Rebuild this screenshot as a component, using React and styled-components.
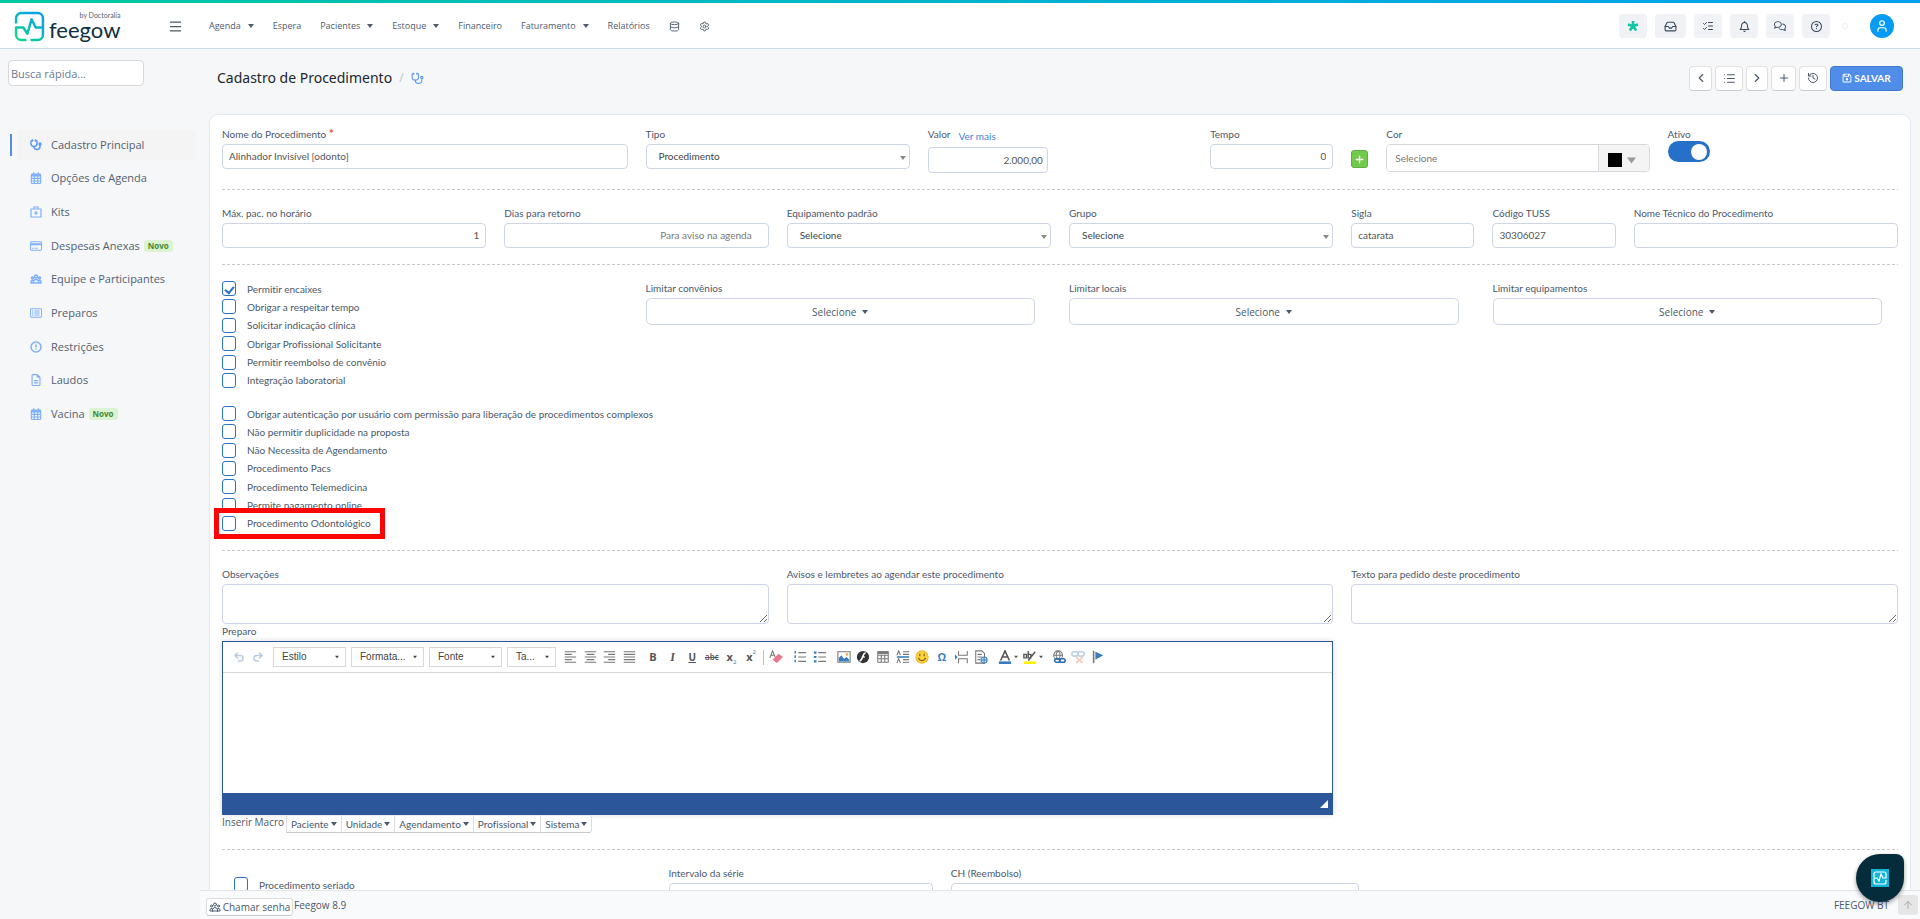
import { useState } from 'react';
import styled, { createGlobalStyle } from 'styled-components';
import {
    Stethoscope, Database, Settings, Inbox, ListChecks, List,
    ChevronLeft, ChevronRight, Plus, History, CircleAlert, Menu, ArrowUp, User,
    Undo2, Redo2,
} from 'lucide-react';
import {
    FaRegCalendarDays, FaRegCreditCard, FaRegRectangleList, FaRegFileLines,
    FaRegBell, FaRegComments, FaRegCircleQuestion, FaRegFloppyDisk,
} from 'react-icons/fa6';
import { HiOutlineUserGroup } from 'react-icons/hi';

const GlobalStyle = createGlobalStyle`
    * {
        box-sizing: border-box;
    }
    body {
        margin: 0;
        background: #f5f7f9;
        color: #4a586b;
        font-family: Lato, "Open Sans", sans-serif;
        font-size: 10px;
        line-height: 14px;
        font-variant-ligatures: none;
    }
    button, input, select, textarea {
        font: inherit;
        font-variant-ligatures: none;
        color: inherit;
        margin: 0;
    }
    svg {
        display: block;
        flex: none;
    }
`;

const Page = styled.div`
    height: 100vh;
    display: flex;
    flex-direction: column;
    overflow: hidden;
`;

const TopBar = styled.header`
    flex: none;
    height: 49px;
    display: flex;
    align-items: center;
    padding: 4px 26px 0 14px;
    border-bottom: 1px solid #d0daea;
    background: linear-gradient(90deg, #00c9a0, #00b8c4 40%, #00a0f0) top / 100% 3px no-repeat #fff;
`;

const Logo = styled.a`
    width: 154px;
    display: flex;
    align-items: center;
    gap: 4px;
    color: #0d3040;
    text-decoration: none;
`;

const Brand = styled.span`
    display: flex;
    flex-direction: column;
    align-items: flex-end;
`;

const BrandBy = styled.small`
    font-size: 7px;
    line-height: 8px;
    color: #55636f;
`;

const BrandName = styled.span`
    font-size: 22px;
    line-height: 22px;
`;

const BareButton = styled.button`
    display: flex;
    align-items: center;
    justify-content: center;
    padding: 0;
    border: 0;
    background: none;
    cursor: pointer;
`;

const Nav = styled.nav`
    flex: 1;
    display: flex;
    align-items: center;
    gap: 19px;
    margin-left: 26px;
    font-family: "Open Sans", sans-serif;
    font-size: 9px;
`;

const NavLink = styled.a`
    display: flex;
    align-items: center;
    gap: 7px;
    color: #4c5b6e;
    text-decoration: none;
`;

const TopActions = styled.div`
    display: flex;
    align-items: center;
    gap: 8px;
`;

const TopAction = styled(BareButton)`
    width: ${(p) => p.$wide ? 31 : 28}px;
    height: 24px;
    border-radius: 4px;
    background: #f0f2f6;
    color: #34495e;
`;

const StatusDot = styled.span`
    width: 6px;
    height: 6px;
    margin: 0 14px 0 4px;
    border: 1px solid #eceef0;
    border-radius: 50%;
`;

const Avatar = styled(BareButton)`
    width: 24px;
    height: 24px;
    border-radius: 50%;
    background: #049af5;
    color: #fff;
`;

const Body = styled.div`
    flex: 1;
    min-height: 0;
    display: flex;
`;

const Sidebar = styled.aside`
    flex: none;
    width: 200px;
    padding: 11px 4px 0 8px;
    font-family: "Open Sans", sans-serif;
`;

const SearchBox = styled.input`
    display: block;
    width: 136px;
    height: 26px;
    padding: 0 2px;
    border: 1px solid #d8d8d8;
    border-radius: 4px;
    background: #fff;
    font-size: 11px;
    &::placeholder {
        color: #6b7c93;
        opacity: 1;
    }
`;

const SideMenu = styled.ul`
    display: grid;
    grid-auto-rows: 1fr;
    height: 303px;
    margin: 42px 0 0;
    padding: 0;
    list-style: none;
`;

const SideItem = styled.li`
    display: flex;
    align-items: center;
    &::before {
        content: "";
        width: 2px;
        height: 22px;
        margin: 0 5px 0 2px;
        background: ${(p) => p.$active ? '#4f8de9' : 'transparent'};
    }
`;

const SideLink = styled.a`
    flex: 1;
    height: 30px;
    display: flex;
    align-items: center;
    padding-left: 13px;
    border-radius: 4px;
    background: ${(p) => p.$active ? '#f4f4f4' : 'none'};
    color: #54606f;
    font-size: 11px;
    font-weight: ${(p) => p.$active ? 500 : 400};
    text-decoration: none;
    svg {
        width: 12px;
        height: 12px;
        margin-right: 9px;
        color: ${(p) => p.$active ? '#5b9bf7' : '#7fb0fb'};
    }
`;

const Badge = styled.span`
    margin-left: 4px;
    padding: 0 4px;
    border-radius: 3px;
    background: #dcf3d2;
    color: #3f8a35;
    font-size: 8px;
    line-height: 12px;
    font-weight: 700;
`;

const Main = styled.main`
    flex: 1;
    min-width: 0;
    display: flex;
    flex-direction: column;
`;

const Content = styled.div`
    flex: 1;
    min-height: 0;
    overflow: hidden;
    padding: 0 9px;
`;

const TitleBar = styled.div`
    height: 65px;
    display: flex;
    align-items: center;
    padding: 0 8px 7px;
`;

const Title = styled.h1`
    flex: 1;
    display: flex;
    align-items: center;
    gap: 7px;
    margin: 0;
    color: #22262c;
    font-family: "Noto Sans", sans-serif;
    font-size: 14px;
    line-height: 20px;
    font-weight: 400;
`;

const Slash = styled.span`
    color: #c3c7cc;
    font-size: 12px;
`;

const Actions = styled.div`
    display: flex;
    gap: 3px;
`;

const ActionButton = styled(BareButton)`
    width: ${(p) => p.$width || 23}px;
    height: 25px;
    border: 1px solid #e0e0e0;
    border-bottom-color: #ccc;
    border-radius: 4px;
    background: #fff;
    color: #4a5768;
`;

const SaveButton = styled(BareButton)`
    gap: 2px;
    width: 73px;
    height: 25px;
    border: 1px solid #4079cf;
    border-radius: 4px;
    background: #4f8de9;
    color: #fff;
    font-weight: 700;
`;

const Card = styled.form`
    border: 1px solid #e3e8f0;
    border-radius: 9px;
    background: #fff;
    padding: 12px 12px 40px;
`;

const Row = styled.div`
    display: grid;
    grid-template-columns: repeat(12, 1fr);
    column-gap: 18px;
    align-items: start;
`;

const ColorRow = styled.div`
    grid-column: span 4;
    display: grid;
    grid-template-columns: 17px 8fr 7fr;
    gap: 18px;
    align-items: start;
`;

const SerialRow = styled.div`
    display: grid;
    grid-template-columns: 52fr 33fr 51fr 65fr;
    column-gap: 18px;
    align-items: start;
    padding-left: 12px;
`;

const Divider = styled.hr`
    height: 1px;
    margin: 16px 0;
    border: 0;
    background: repeating-linear-gradient(90deg, #c9c9c9 0 3px, transparent 3px 5px);
`;

const Field = styled.div`
    grid-column: span ${(p) => p.$span || 1};
    min-width: 0;
    padding-right: ${(p) => p.$inset ? 16 : 0}px;
`;

const Label = styled.label`
    display: block;
    margin-bottom: 3px;
    white-space: nowrap;
`;

const LabelLine = styled.div`
    display: flex;
    align-items: flex-start;
    gap: 8px;
    height: 20px;
`;

const Required = styled.span`
    color: #f0432e;
    font-size: 12px;
    font-weight: 700;
`;

const MoreLink = styled.a`
    padding-top: 2px;
    color: #3f7fdf;
    text-decoration: none;
`;

const TextInput = styled.input`
    display: block;
    width: 100%;
    height: 25px;
    padding: 0 6px 1px;
    border: 1px solid #ced6e5;
    border-radius: 4px;
    background: #fff;
    color: #555;
    text-align: ${(p) => p.$right ? 'right' : 'left'};
    &::placeholder {
        color: #777;
        opacity: 1;
    }
`;

const PriceInput = styled(TextInput)`
    width: 120px;
    height: 26px;
    padding: 0 4px;
`;

const DaysInput = styled(TextInput)`
    padding-right: 16px;
`;

const SelectWrap = styled.div`
    position: relative;
`;

const SelectArrow = styled.span`
    position: absolute;
    right: 4px;
    top: 11px;
    pointer-events: none;
    color: #888;
`;

const SelectBox = styled.select`
    display: block;
    appearance: none;
    width: 100%;
    height: 25px;
    padding: 0 12px 1px;
    border: 1px solid #ced6e5;
    border-radius: 4px;
    background: #fff;
    color: #444;
`;

const PlusButton = styled(BareButton)`
    width: 17px;
    height: 18px;
    margin-top: 23px;
    border: 1px solid #63ad45;
    border-radius: 3px;
    background: #70ca4c;
    color: #fff;
`;

const ColorGroup = styled.div`
    display: flex;
    height: 28px;
    border: 1px solid #d5d8dd;
    border-radius: 4px;
    overflow: hidden;
`;

const ColorInput = styled.input`
    flex: 1;
    min-width: 0;
    padding: 0 8px;
    border: 0;
    background: #fff;
    &::placeholder {
        color: #777;
        opacity: 1;
    }
`;

const ColorButton = styled(BareButton)`
    gap: 5px;
    width: 51px;
    padding: 4px 4px 0 0;
    border-left: 1px solid #d5d8dd;
    background: #f4f4f4;
    color: #9a9a9a;
`;

const Swatch = styled.span`
    width: 14px;
    height: 14px;
    background: #000;
`;

const Switch = styled.input`
    display: block;
    appearance: none;
    width: 42px;
    height: 21px;
    margin-top: -3px;
    border-radius: 11px;
    background: ${(p) => p.checked ? '#2670c9' : '#ccc'};
    &::before {
        content: "";
        display: block;
        width: 16px;
        height: 16px;
        margin: 3px 0 0 ${(p) => p.checked ? 23 : 3}px;
        border-radius: 50%;
        background: #fff;
    }
`;

const CheckColumn = styled.div`
    grid-column: span 3;
    padding-bottom: 3px;
`;

const CheckGroup = styled.div`
    display: flex;
    flex-direction: column;
    justify-content: space-between;
    height: ${(p) => p.$height}px;
    & + & {
        margin-top: 18px;
    }
`;

const CheckLine = styled.div`
    position: relative;
    display: flex;
    align-items: center;
    gap: 11px;
    height: 15px;
    white-space: nowrap;
    line-height: 12px;
`;

const CheckBox = styled.input`
    appearance: none;
    flex: none;
    display: grid;
    place-items: center;
    width: 14px;
    height: 15px;
    border: 1px solid #2a72c8;
    border-radius: 3px;
    background: #fff;
    &:checked::before {
        content: "";
        width: 7px;
        height: 4px;
        border-left: 2px solid #2a72c8;
        border-bottom: 2px solid #2a72c8;
        transform: rotate(-50deg);
    }
`;

const Highlight = styled.span`
    position: absolute;
    left: -8px;
    top: -8px;
    width: 171px;
    height: 31px;
    border: 5px solid #fb0505;
    pointer-events: none;
`;

const MultiButton = styled(BareButton)`
    gap: 6px;
    width: 100%;
    height: 27px;
    border: 1px solid #ced6e5;
    border-radius: 5px;
    background: #fff;
    font-family: "Open Sans", sans-serif;
`;

const Area = styled.textarea`
    display: block;
    width: 100%;
    height: 40px;
    padding: 4px 6px;
    border: 1px solid #ced3e8;
    border-radius: 4px;
    background: #fff;
    resize: vertical;
`;

const Editor = styled.div`
    border: 1px solid #2b579a;
    background: #fff;
    box-shadow: 0 0 6px rgba(0, 0, 0, 0.15);
`;

const Toolbar = styled.div`
    display: flex;
    align-items: center;
    gap: 4px;
    height: 31px;
    padding-left: 6px;
    border-bottom: 1px solid #d8d8d8;
    color: #555;
    font-family: "Open Sans", sans-serif;
`;

const ToolGroup = styled.div`
    flex: none;
    display: grid;
    grid-auto-flow: column;
    grid-auto-columns: 1fr;
    width: ${(p) => p.$width}px;
`;

const Tool = styled(BareButton)`
    height: 20px;
    gap: 2px;
    opacity: ${(p) => p.$faded ? 0.35 : 1};
    color: ${(p) => p.$color || '#555'};
`;

const Bold = styled.b`
    font-size: 11px;
`;

const Italic = styled.i`
    font-family: "Liberation Serif", serif;
    font-size: 12px;
    font-weight: 700;
`;

const Underlined = styled.u`
    font-size: 10px;
    font-weight: 700;
`;

const Struck = styled.s`
    font-size: 8px;
    font-weight: 600;
`;

const Script = styled.sup`
    align-self: ${(p) => p.$low ? 'flex-end' : 'flex-start'};
    margin-left: -2px;
    font-size: 6px;
    line-height: 10px;
    color: #3a7cbc;
`;

const ToolSeparator = styled.span`
    width: 1px;
    height: 15px;
    margin: 0 -2px;
    background: #c0c0c0;
`;

const Combo = styled(BareButton)`
    flex: none;
    justify-content: space-between;
    width: ${(p) => p.$width || 73}px;
    height: 20px;
    margin-left: 1px;
    padding: 0 6px 0 8px;
    border: 1px solid #d8d8d8;
    color: #444;
    font-family: "Liberation Sans", Arial, sans-serif;
`;

const EditArea = styled.textarea`
    display: block;
    width: 100%;
    height: 120px;
    padding: 10px;
    border: 0;
    outline: none;
    resize: none;
`;

const EditorFoot = styled.div`
    display: flex;
    justify-content: flex-end;
    align-items: center;
    height: 21px;
    padding-right: 4px;
    background: #2b579a;
`;

const MacroRow = styled.div`
    display: flex;
    height: 18px;
`;

const MacroLabel = styled.span`
    width: 64px;
    font-family: "Open Sans", sans-serif;
    white-space: nowrap;
`;

const MacroButton = styled(BareButton)`
    gap: 2px;
    padding: 0 4px;
    border: 1px solid #ddd;
    border-top-color: #eee;
    border-bottom-color: #c9c9c9;
    background: #fff;
    & + & {
        border-left: 0;
    }
    &:last-child {
        border-radius: 0 3px 3px 0;
    }
`;

const SerialCheck = styled(CheckLine)`
    margin-top: 11px;
`;

const Footer = styled.footer`
    flex: none;
    display: flex;
    align-items: center;
    height: 29px;
    padding: 0 2px 0 6px;
    border-top: 1px solid #e2e4e8;
    background: #f9fafc;
    font-family: "Open Sans", sans-serif;
`;

const CallButton = styled(BareButton)`
    gap: 2px;
    width: 87px;
    height: 18px;
    margin-top: 3px;
    border: 1px solid #ddd;
    border-bottom-color: #c9c9c9;
    border-radius: 3px;
    background: #fff;
`;

const Version = styled.span`
    flex: 1;
    margin-left: 1px;
`;

const UpButton = styled(BareButton)`
    width: 20px;
    height: 20px;
    margin-left: 9px;
    border-radius: 3px;
    background: #e6e6e6;
    color: #aaa;
`;

const ChatBubble = styled(BareButton)`
    position: fixed;
    right: 16px;
    bottom: 17px;
    width: 48px;
    height: 48px;
    border-radius: 50% 8px 50% 50%;
    background: #052c3b;
    box-shadow: 0 2px 4px rgba(0, 0, 0, 0.4);
`;

const Caret = ({ size = 6 }) => (
    <svg width={size} height={size} viewBox="0 0 6 6"><path d="M0 1h6L3 5z" fill="currentColor" /></svg>
);

const LogoMark = () => (
    <svg width="31" height="31" viewBox="0 0 30 30" fill="none">
        <defs>
            <linearGradient id="mark" x1="0.9" y1="0" x2="0.1" y2="1">
                <stop offset="0" stopColor="#0a9cf5" />
                <stop offset="0.5" stopColor="#06b7c4" />
                <stop offset="1" stopColor="#12d98a" />
            </linearGradient>
        </defs>
        <path d="M2 12V7a5 5 0 0 1 5-5h16a5 5 0 0 1 5 5v16a5 5 0 0 1-5 5H16M28 16h-7l-4-8-4 14-4-6H2v7a5 5 0 0 0 5 5h5" stroke="url(#mark)" strokeWidth="2.4" strokeLinejoin="round" />
    </svg>
);

const StarMark = () => (
    <svg width="12" height="12" viewBox="0 0 12 12" stroke="#13c4a5" strokeWidth="2.6">
        <path d="M6 6V1M6 6l5-1.6M6 6l3.2 4.6M6 6l-3.2 4.6M6 6L1 4.4" />
    </svg>
);

const KitIcon = () => (
    <svg viewBox="0 0 12 12" fill="none" stroke="currentColor" strokeWidth="1.2">
        <path d="M1 3h10v8H1zM4 3V1h4v2M6 5v4M4 7h4" />
    </svg>
);

const sideItems = [
    { label: 'Cadastro Principal', icon: <Stethoscope strokeWidth={3} />, active: true },
    { label: 'Opções de Agenda', icon: <FaRegCalendarDays /> },
    { label: 'Kits', icon: <KitIcon /> },
    { label: 'Despesas Anexas', icon: <FaRegCreditCard />, isNew: true },
    { label: 'Equipe e Participantes', icon: <HiOutlineUserGroup strokeWidth={3} /> },
    { label: 'Preparos', icon: <FaRegRectangleList /> },
    { label: 'Restrições', icon: <CircleAlert strokeWidth={3} /> },
    { label: 'Laudos', icon: <FaRegFileLines /> },
    { label: 'Vacina', icon: <FaRegCalendarDays />, isNew: true },
];

const navItems = [
    ['Agenda', true], ['Espera'], ['Pacientes', true], ['Estoque', true],
    ['Financeiro'], ['Faturamento', true], ['Relatórios'],
];

const firstChecks = [
    'Permitir encaixes', 'Obrigar a respeitar tempo', 'Solicitar indicação clínica',
    'Obrigar Profissional Solicitante', 'Permitir reembolso de convênio', 'Integração laboratorial',
];

const secondChecks = [
    'Obrigar autenticação por usuário com permissão para liberação de procedimentos complexos',
    'Não permitir duplicidade na proposta', 'Não Necessita de Agendamento', 'Procedimento Pacs',
    'Procedimento Telemedicina', 'Permite pagamento online', 'Procedimento Odontológico',
];

const macros = ['Paciente', 'Unidade', 'Agendamento', 'Profissional', 'Sistema'];

function Input({ id, label, span, ...rest }) {
    return (
        <Field $span={span}>
            <Label htmlFor={id}>{label}</Label>
            <TextInput id={id} {...rest} />
        </Field>
    );
}

function Select({ id, label, span, value }) {
    return (
        <Field $span={span}>
            <Label htmlFor={id}>{label}</Label>
            <SelectWrap>
                <SelectBox id={id}><option>{value}</option></SelectBox>
                <SelectArrow><Caret /></SelectArrow>
            </SelectWrap>
        </Field>
    );
}

function Multi({ id, label }) {
    return (
        <Field $span={3} $inset>
            <Label htmlFor={id}>{label}</Label>
            <MultiButton id={id} type="button">Selecione <Caret /></MultiButton>
        </Field>
    );
}

function Check({ id, label, checked, marked }) {
    return (
        <CheckLine>
            <CheckBox type="checkbox" id={id} defaultChecked={checked} />
            <label htmlFor={id}>{label}</label>
            {marked && <Highlight />}
        </CheckLine>
    );
}

// small 16px drawings for the editor toolbar
const Glyph = ({ children }) => (
    <svg width="14" height="14" viewBox="0 0 16 16" fill="none" stroke="#777" strokeWidth="1.2">{children}</svg>
);

function EditorToolbar() {
    return (
        <Toolbar>
            <ToolGroup $width={39}>
                <Tool type="button" $color="#b9cbe2" aria-label="Desfazer"><Undo2 size={12} strokeWidth={3} /></Tool>
                <Tool type="button" $color="#b9cbe2" aria-label="Refazer"><Redo2 size={12} strokeWidth={3} /></Tool>
            </ToolGroup>
            <Combo type="button">Estilo <Caret size={4} /></Combo>
            <Combo type="button">Formata... <Caret size={4} /></Combo>
            <Combo type="button">Fonte <Caret size={4} /></Combo>
            <Combo type="button" $width={49}>Ta... <Caret size={4} /></Combo>
            <ToolGroup $width={79}>
                <Tool type="button" aria-label="Esquerda"><Glyph><path d="M2 2h13M2 5h8M2 8h13M2 11h8M2 14h13" /></Glyph></Tool>
                <Tool type="button" aria-label="Centro"><Glyph><path d="M2 2h13M4 5h9M2 8h13M4 11h9M2 14h13" /></Glyph></Tool>
                <Tool type="button" aria-label="Direita"><Glyph><path d="M2 2h13M7 5h8M2 8h13M7 11h8M2 14h13" /></Glyph></Tool>
                <Tool type="button" aria-label="Justificado"><Glyph><path d="M2 2h13M2 5h13M2 8h13M2 11h13M2 14h13" /></Glyph></Tool>
            </ToolGroup>
            <ToolGroup $width={118}>
                <Tool type="button"><Bold>B</Bold></Tool>
                <Tool type="button"><Italic>I</Italic></Tool>
                <Tool type="button"><Underlined>U</Underlined></Tool>
                <Tool type="button"><Struck>abc</Struck></Tool>
                <Tool type="button"><Bold>x</Bold><Script as="sub" $low>2</Script></Tool>
                <Tool type="button"><Bold>x</Bold><Script>2</Script></Tool>
            </ToolGroup>
            <ToolSeparator />
            <ToolGroup $width={20}>
                <Tool type="button" aria-label="Remover formatação">
                    <Glyph>
                        <path d="M1 9l3-8 3 7M2 6h4" />
                        <path d="M5 11l6-6 4 3-6 6z" fill="#e8788c" stroke="#e8788c" />
                    </Glyph>
                </Tool>
            </ToolGroup>
            <ToolGroup $width={40}>
                <Tool type="button" aria-label="Lista numerada">
                    <Glyph><path d="M6 3h9M6 8h9M6 13h9" /><path d="M2.500 1v4M2.500 6v4M2.500 11v4" stroke="#3a7cbc" strokeWidth="1.600" strokeDasharray="3 1" /></Glyph>
                </Tool>
                <Tool type="button" aria-label="Lista">
                    <Glyph><path d="M6 3h9M6 8h9M6 13h9" /><path d="M1 3h3M1 8h3M1 13h3" stroke="#3a7cbc" strokeWidth="2.500" /></Glyph>
                </Tool>
            </ToolGroup>
            <ToolGroup $width={157}>
                <Tool type="button" aria-label="Imagem">
                    <Glyph><path d="M1 2h14v12H1z" /><path d="M2 13V9l3-3 3 4 3-2 3 3v2z" fill="#3a7cbc" stroke="none" /><circle cx="11.500" cy="5" r="1.500" fill="#f3b14b" stroke="none" /></Glyph>
                </Tool>
                <Tool type="button" aria-label="Flash">
                    <Glyph><circle cx="8" cy="8" r="7" fill="#333" stroke="none" /><path d="M11 3.500c-4 0-3 9-7 9M6.500 8H10" stroke="#fff" strokeWidth="1.800" /></Glyph>
                </Tool>
                <Tool type="button" aria-label="Tabela">
                    <Glyph><path d="M2 2h12v12H2zM2 6h12M2 10h12M6 5v9M10 5v9" /><path d="M2 3h12" strokeWidth="3" /></Glyph>
                </Tool>
                <Tool type="button" aria-label="Linha horizontal">
                    <Glyph><path d="M1 6l2-5 2 5M1 15l2-5 2 5M8 2h7M8 5h7M8 11h7M8 14h7" /><path d="M1 8h14" stroke="#3a7cbc" strokeWidth="1.800" /></Glyph>
                </Tool>
                <Tool type="button" aria-label="Emoticon">
                    <Glyph><circle cx="8" cy="8" r="7" fill="#fbd33e" stroke="#e9b92b" /><path d="M4 9c1 4 7 4 8 0" stroke="#7b5310" /><path d="M5.500 4v3M10.500 4v3" stroke="#7b5310" /></Glyph>
                </Tool>
                <Tool type="button" $color="#3a7cbc"><Bold>Ω</Bold></Tool>
                <Tool type="button" aria-label="Quebra de página">
                    <Glyph><path d="M4 1v5h10V1M4 15v-5h10v5" /><path d="M0 5v6l3-3z" fill="#3a7cbc" stroke="none" /></Glyph>
                </Tool>
                <Tool type="button" aria-label="IFrame">
                    <Glyph><path d="M2 1h7l3 3v11H2zM4 5h5M4 8h5M4 11h3" /><circle cx="11.500" cy="11.500" r="3.500" fill="#cfe2f5" stroke="#3a7cbc" /><path d="M8 11.500h7M11.500 8v7" stroke="#3a7cbc" /></Glyph>
                </Tool>
            </ToolGroup>
            <ToolGroup $width={50}>
                <Tool type="button" aria-label="Cor do texto">
                    <Glyph><path d="M3 12l5-11 5 11M5 8h6" stroke="#555" strokeWidth="1.800" /><path d="M1 14.500h14" stroke="#3a7cbc" strokeWidth="3" /></Glyph>
                    <Caret size={4} />
                </Tool>
                <Tool type="button" aria-label="Cor de fundo">
                    <Glyph><path d="M1 5h3v4H1zM6 1v8h3V5H6M6 12l8-10" stroke="#555" strokeWidth="1.600" /><path d="M1 14.500h14" stroke="#fff200" strokeWidth="3" /></Glyph>
                    <Caret size={4} />
                </Tool>
            </ToolGroup>
            <ToolGroup $width={59}>
                <Tool type="button" aria-label="Link">
                    <Glyph><circle cx="7" cy="6" r="5" /><path d="M2 6h10M7 1c-3 3-3 7 0 10M7 1c3 3 3 7 0 10" /><rect x="3" y="10" width="6" height="4" rx="2" stroke="#2f6cab" strokeWidth="1.800" /><rect x="9" y="10" width="6" height="4" rx="2" stroke="#2f6cab" strokeWidth="1.800" /></Glyph>
                </Tool>
                <Tool type="button" $faded aria-label="Remover link">
                    <Glyph><rect x="1" y="2" width="7" height="5" rx="2.500" stroke="#3a7cbc" strokeWidth="1.800" /><rect x="8" y="2" width="7" height="5" rx="2.500" stroke="#3a7cbc" strokeWidth="1.800" /><path d="M6 8l7 7M13 8l-7 7" stroke="#e06c4c" strokeWidth="2" /></Glyph>
                </Tool>
                <Tool type="button" aria-label="Âncora">
                    <Glyph><path d="M3 1v14" strokeWidth="1.800" /><path d="M5 2l9 4-9 5z" fill="#3a7cbc" stroke="none" /></Glyph>
                </Tool>
            </ToolGroup>
        </Toolbar>
    );
}

export default function App() {
    const [active, setActive] = useState(true);

    return (
        <Page>
            <GlobalStyle />
            <TopBar>
                <Logo href="#" aria-label="feegow">
                    <LogoMark />
                    <Brand>
                        <BrandBy>by Doctoralia</BrandBy>
                        <BrandName>feegow</BrandName>
                    </Brand>
                </Logo>
                <BareButton type="button" aria-label="Menu"><Menu size={15} /></BareButton>
                <Nav>
                    {navItems.map(([label, drop]) => (
                        <NavLink key={label} href="#">{label}{drop && <Caret />}</NavLink>
                    ))}
                    <NavLink href="#" aria-label="Dados"><Database size={11} /></NavLink>
                    <NavLink href="#" aria-label="Configurações"><Settings size={11} /></NavLink>
                </Nav>
                <TopActions>
                    <TopAction type="button" aria-label="Novidades"><StarMark /></TopAction>
                    <TopAction type="button" $wide aria-label="Caixa"><Inbox size={13} /></TopAction>
                    <TopAction type="button" aria-label="Tarefas"><ListChecks size={12} /></TopAction>
                    <TopAction type="button" aria-label="Notificações"><FaRegBell size={11} /></TopAction>
                    <TopAction type="button" aria-label="Chat"><FaRegComments size={12} /></TopAction>
                    <TopAction type="button" aria-label="Ajuda"><FaRegCircleQuestion size={11} /></TopAction>
                    <StatusDot />
                    <Avatar type="button" aria-label="Perfil"><User size={14} /></Avatar>
                </TopActions>
            </TopBar>

            <Body>
                <Sidebar>
                    <SearchBox type="text" placeholder="Busca rápida..." aria-label="Busca rápida" />
                    <SideMenu>
                        {sideItems.map((item) => (
                            <SideItem key={item.label} $active={item.active}>
                                <SideLink href="#" $active={item.active}>
                                    {item.icon}
                                    {item.label}
                                    {item.isNew && <Badge>Novo</Badge>}
                                </SideLink>
                            </SideItem>
                        ))}
                    </SideMenu>
                </Sidebar>

                <Main>
                    <Content>
                        <TitleBar>
                            <Title>
                                Cadastro de Procedimento
                                <Slash>/</Slash>
                                <Stethoscope size={13} color="#5b95f5" />
                            </Title>
                            <Actions>
                                <ActionButton type="button" aria-label="Anterior"><ChevronLeft size={14} /></ActionButton>
                                <ActionButton type="button" $width={28} aria-label="Lista"><List size={13} /></ActionButton>
                                <ActionButton type="button" $width={22} aria-label="Próximo"><ChevronRight size={14} /></ActionButton>
                                <ActionButton type="button" $width={25} aria-label="Novo"><Plus size={12} /></ActionButton>
                                <ActionButton type="button" $width={28} aria-label="Histórico"><History size={12} /></ActionButton>
                                <SaveButton type="button"><FaRegFloppyDisk size={10} />SALVAR</SaveButton>
                            </Actions>
                        </TitleBar>

                        <Card>
                            <Row>
                                <Input id="nome" span={3} label={<>Nome do Procedimento <Required>*</Required></>} defaultValue="Alinhador Invisível [odonto]" />
                                <Select id="tipo" span={2} label="Tipo" value="Procedimento" />
                                <Field $span={2}>
                                    <LabelLine>
                                        <Label htmlFor="valor">Valor</Label>
                                        <MoreLink href="#">Ver mais</MoreLink>
                                    </LabelLine>
                                    <PriceInput id="valor" $right defaultValue="2.000,00" />
                                </Field>
                                <Input id="tempo" label="Tempo" $right defaultValue="0" />
                                <ColorRow>
                                    <PlusButton type="button" aria-label="Adicionar"><Plus size={11} strokeWidth={3} /></PlusButton>
                                    <Field>
                                        <Label htmlFor="cor">Cor</Label>
                                        <ColorGroup>
                                            <ColorInput id="cor" placeholder="Selecione" />
                                            <ColorButton type="button" aria-label="Escolher cor"><Swatch /><Caret size={9} /></ColorButton>
                                        </ColorGroup>
                                    </Field>
                                    <Field>
                                        <Label htmlFor="ativo">Ativo</Label>
                                        <Switch type="checkbox" id="ativo" checked={active} onChange={() => setActive(!active)} />
                                    </Field>
                                </ColorRow>
                            </Row>
                            <Divider />
                            <Row>
                                <Input id="max" span={2} label="Máx. pac. no horário" $right defaultValue="1" />
                                <Field $span={2}>
                                    <Label htmlFor="dias">Dias para retorno</Label>
                                    <DaysInput id="dias" $right placeholder="Para aviso na agenda" />
                                </Field>
                                <Select id="equip" span={2} label="Equipamento padrão" value="Selecione" />
                                <Select id="grupo" span={2} label="Grupo" value="Selecione" />
                                <Input id="sigla" label="Sigla" defaultValue="catarata" />
                                <Input id="tuss" label="Código TUSS" defaultValue="30306027" />
                                <Input id="tecnico" span={2} label="Nome Técnico do Procedimento" />
                            </Row>
                            <Divider />
                            <Row>
                                <CheckColumn>
                                    <CheckGroup $height={107}>
                                        {firstChecks.map((label, i) => (
                                            <Check key={label} id={`a${i}`} label={label} checked={i === 0} />
                                        ))}
                                    </CheckGroup>
                                    <CheckGroup $height={125}>
                                        {secondChecks.map((label, i) => (
                                            <Check key={label} id={`b${i}`} label={label} marked={i === 6} />
                                        ))}
                                    </CheckGroup>
                                </CheckColumn>
                                <Multi id="convenios" label="Limitar convênios" />
                                <Multi id="locais" label="Limitar locais" />
                                <Multi id="equipamentos" label="Limitar equipamentos" />
                            </Row>
                            <Divider />
                            <Row>
                                <Field $span={4}><Label htmlFor="obs">Observações</Label><Area id="obs" /></Field>
                                <Field $span={4}><Label htmlFor="avisos">Avisos e lembretes ao agendar este procedimento</Label><Area id="avisos" /></Field>
                                <Field $span={4}><Label htmlFor="pedido">Texto para pedido deste procedimento</Label><Area id="pedido" /></Field>
                                <Field $span={8}>
                                    <Label htmlFor="preparo">Preparo</Label>
                                    <Editor>
                                        <EditorToolbar />
                                        <EditArea id="preparo" />
                                        <EditorFoot>
                                            <svg width="8" height="8" viewBox="0 0 8 8"><path d="M8 0v8H0z" fill="#fff" /></svg>
                                        </EditorFoot>
                                    </Editor>
                                    <MacroRow>
                                        <MacroLabel>Inserir Macro</MacroLabel>
                                        {macros.map((m) => <MacroButton type="button" key={m}>{m}<Caret /></MacroButton>)}
                                    </MacroRow>
                                </Field>
                            </Row>
                            <Divider />
                            <SerialRow>
                                <SerialCheck>
                                    <CheckBox type="checkbox" id="seriado" />
                                    <label htmlFor="seriado">Procedimento seriado</label>
                                </SerialCheck>
                                <Input id="intervalo" label="Intervalo da série" />
                                <Input id="ch" label="CH (Reembolso)" />
                            </SerialRow>
                        </Card>
                    </Content>
                    <Footer>
                        <CallButton type="button"><HiOutlineUserGroup size={12} />Chamar senha</CallButton>
                        <Version>Feegow 8.9</Version>
                        FEEGOW BT
                        <UpButton type="button" aria-label="Topo"><ArrowUp size={12} /></UpButton>
                    </Footer>
                </Main>
            </Body>

            <ChatBubble type="button" aria-label="Chat de ajuda">
                <svg width="18" height="18" viewBox="0 0 18 18" fill="none">
                    <path d="M0 0h18v18H0z" fill="#12b5d8" />
                    <path d="M3 8V5a2 2 0 0 1 2-2h8a2 2 0 0 1 2 2v4h-3l-2-4-2 7-2-3H3v4a2 2 0 0 0 2 2h8a2 2 0 0 0 2-2v-2" stroke="#fff" strokeWidth="1.200" />
                </svg>
            </ChatBubble>
        </Page>
    );
}
